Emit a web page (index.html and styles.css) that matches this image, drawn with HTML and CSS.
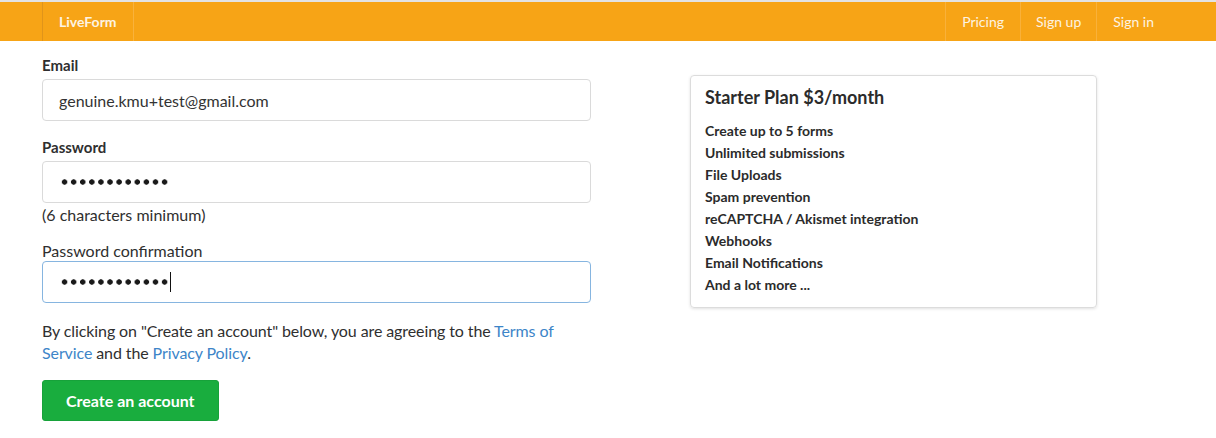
FILE: index.html
```
<!DOCTYPE html>
<html>
<head>
<meta charset="utf-8">
<link rel="stylesheet" href="styles.css">
</head>
<body>
<nav class="navbar">
  <div class="nav-inner">
    <a class="brand" href="#">LiveForm</a>
    <ul class="nav-right">
      <li><a href="#">Pricing</a></li>
      <li><a href="#">Sign up</a></li>
      <li><a href="#">Sign in</a></li>
    </ul>
  </div>
</nav>
<main class="main">
  <form class="signup">
    <div class="group">
      <label class="label bold">Email</label>
      <div class="input">genuine.kmu+test@gmail.com</div>
    </div>
    <div class="group">
      <label class="label bold">Password</label>
      <div class="input"><span class="dots" aria-label="password"></span></div>
      <div class="help">(6 characters minimum)</div>
    </div>
    <div class="group">
      <label class="label plain">Password confirmation</label>
      <div class="input focus"><span class="dots" aria-label="password confirmation"></span><span class="caret"></span></div>
    </div>
    <p class="terms">By clicking on "Create an account" below, you are agreeing to the <a href="#">Terms of Service</a> and the <a href="#">Privacy Policy</a>.</p>
    <button class="btn" type="button">Create an account</button>
  </form>
  <aside class="card">
    <h3 class="card-title">Starter Plan $3/month</h3>
    <ul class="features">
      <li>Create up to 5 forms</li>
      <li>Unlimited submissions</li>
      <li>File Uploads</li>
      <li>Spam prevention</li>
      <li>reCAPTCHA / Akismet integration</li>
      <li>Webhooks</li>
      <li>Email Notifications</li>
      <li>And a lot more ...</li>
    </ul>
  </aside>
</main>
</body>
</html>
```
FILE: styles.css
```
* { box-sizing: border-box; }
body {
  margin: 0;
  font-family: Lato, "Noto Sans", sans-serif;
  color: #2f2f2f;
  background: #fff;
}
.navbar {
  border-top: 2px solid #e3e3e3;
  background: #f7a416;
  height: 41px;
}
.nav-inner {
  display: flex;
  align-items: stretch;
  height: 39px;
  padding: 0 47px 0 42px;
}
.brand {
  display: flex;
  align-items: center;
  padding: 0 16px;
  border-left: 1px solid #e0941a;
  border-right: 1px solid #f9b23c;
  color: #fdf3e2;
  font-weight: 700;
  font-size: 14px;
  text-decoration: none;
}
.nav-right {
  display: flex;
  margin: 0 0 0 auto;
  padding: 0;
  list-style: none;
}
.nav-right li {
  display: flex;
  border-left: 1px solid #f9b13a;
}
.nav-right a {
  display: flex;
  align-items: center;
  padding: 0 16px;
  color: #fdf3e2;
  font-size: 14px;
  text-decoration: none;
}
.nav-right li:nth-child(2) a { padding: 0 15px; }
.nav-right li:nth-child(3) a { padding: 0 15px 0 16px; }
.main {
  display: flex;
  align-items: flex-start;
  gap: 99px;
  padding: 14px 42px 0;
}
.signup { width: 549px; }
.group { margin-bottom: 16px; }
.label {
  display: block;
  line-height: 20px;
}
.label.bold { font-weight: 700; font-size: 15px; margin-bottom: 4px; }
.label.plain { font-size: 16px; margin-top: -1px; }
.input {
  height: 42px;
  border: 1px solid #dadada;
  border-radius: 4px;
  padding: 0 16px;
  display: flex;
  align-items: center;
  font-size: 16px;
  color: #333;
}
.dots {
  display: inline-block;
  width: 109px;
  height: 6px;
  margin-left: 1px;
  background-image: radial-gradient(circle, #1a1a1a 2.4px, transparent 3px);
  background-size: 9.1px 6px;
  background-repeat: repeat-x;
}
.input.focus { border-color: #86b5e0; }
.caret {
  display: inline-block;
  width: 1px;
  height: 20px;
  background: #111;
  margin-left: 1px;
}
.help {
  font-size: 16px;
  line-height: 22px;
  margin-top: 1px;
  margin-bottom: -1px;
}
.terms {
  font-size: 16px;
  line-height: 22px;
  letter-spacing: -0.1px;
  margin: 0 0 16px;
  padding-top: 1px;
}
.terms a { color: #3d85c8; text-decoration: none; }
.btn {
  height: 41px;
  padding: 0 23px;
  background: #19ad3e;
  border: 1px solid #17a23a;
  border-radius: 3px;
  color: #fff;
  font-family: Lato, "Noto Sans", sans-serif;
  font-weight: 700;
  font-size: 16px;
}
.card {
  width: 407px;
  margin-top: 20px;
  border: 1px solid #dcdcdc;
  border-radius: 4px;
  box-shadow: 0 1px 3px rgba(0,0,0,0.12);
  padding: 9px 14px 11px;
}
.card-title {
  margin: 0 0 11px;
  font-size: 18px;
  line-height: 24px;
  font-weight: 700;
  color: #2b2b2b;
}
.features {
  list-style: none;
  margin: 0;
  padding: 0;
}
.features li {
  font-size: 14px;
  font-weight: 700;
  line-height: 22px;
  color: #2b2b2b;
}
```
